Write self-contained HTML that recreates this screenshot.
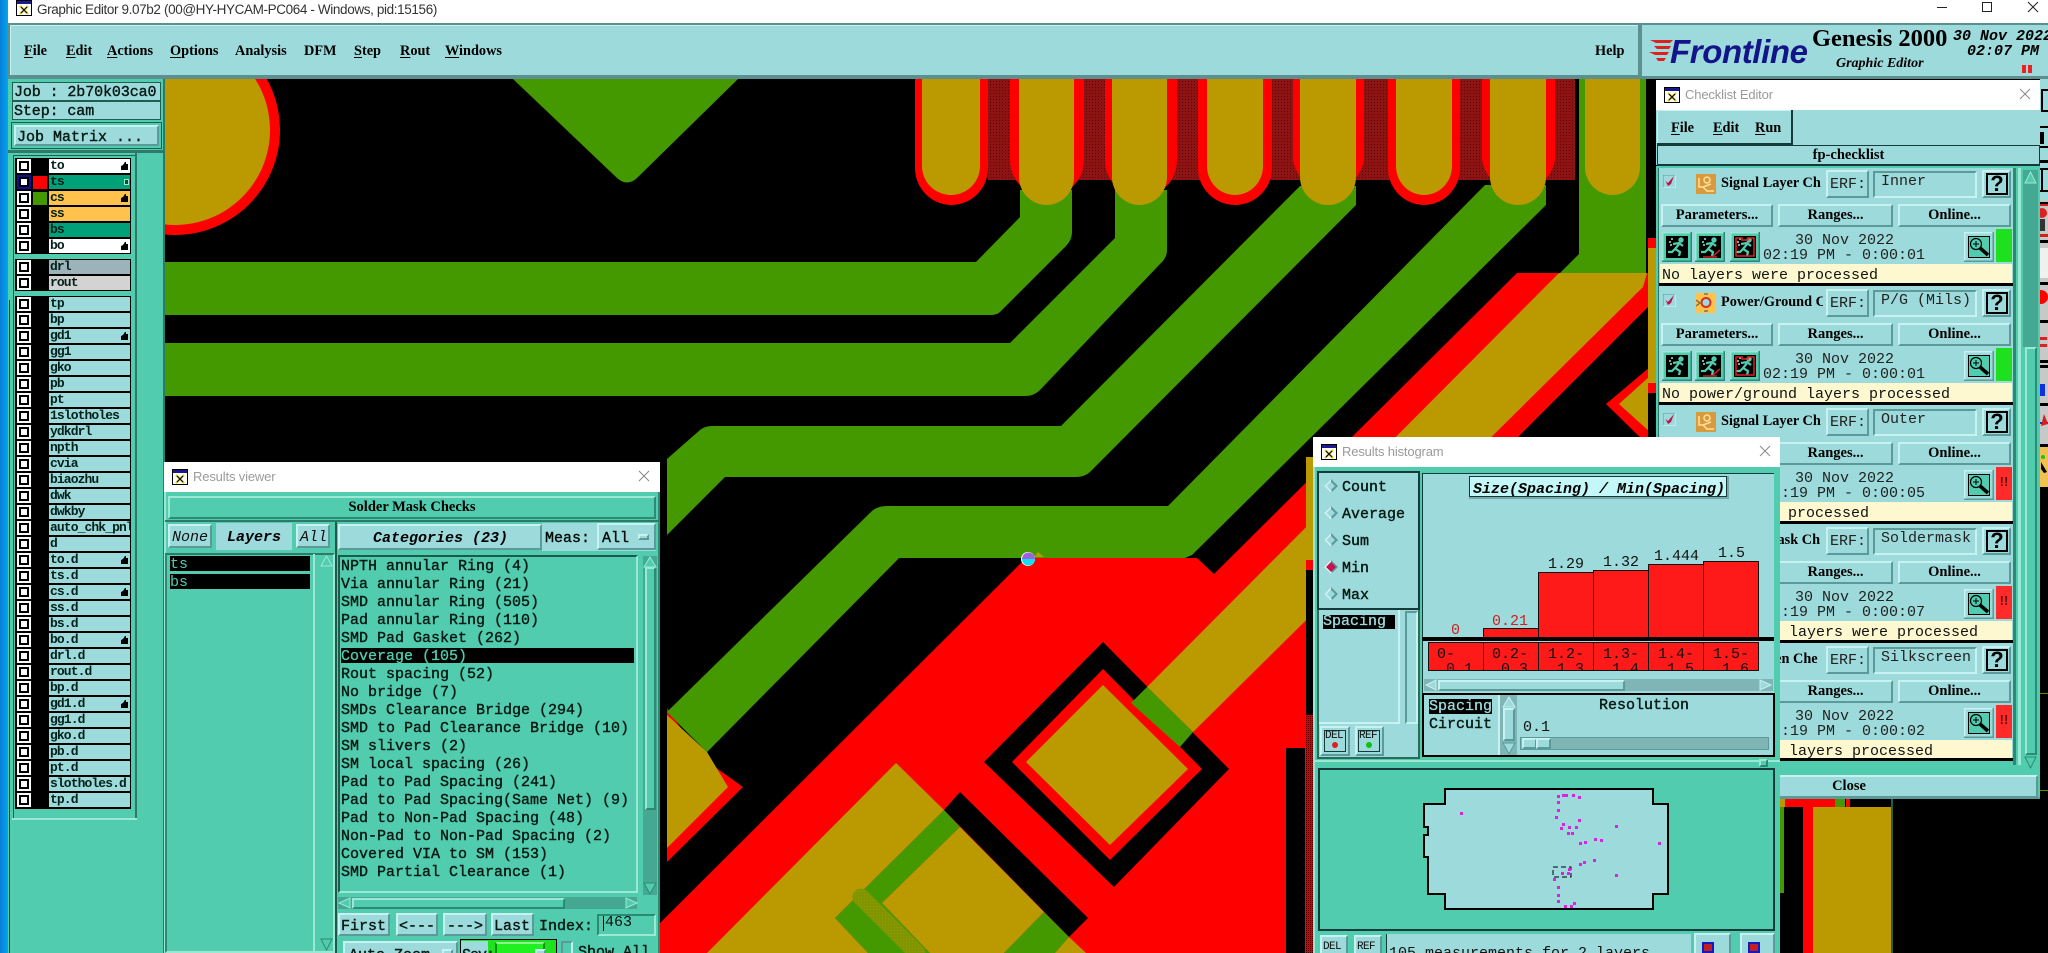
<!DOCTYPE html>
<html><head><meta charset="utf-8"><title>Graphic Editor</title>
<style>
html,body{margin:0;padding:0;width:2048px;height:953px;overflow:hidden;background:#000}
body{position:relative}
div,span,svg,b,i{position:absolute;display:block;box-sizing:border-box}
.t{white-space:pre;line-height:1;font:15px/1 "Liberation Mono",monospace;color:#111}
.tb{white-space:pre;font:15px/1 "Liberation Mono",monospace;color:#061a14;-webkit-text-stroke:.4px #061a14}
.ti{white-space:pre;font:italic 15px/1 "Liberation Mono",monospace;color:#111}
.tbi{white-space:pre;font:italic bold 15px/1 "Liberation Mono",monospace;color:#000}
.s{white-space:pre;font:bold 14.3px/1 "Liberation Serif",serif;color:#000}
.w{white-space:pre;font:13px/1 "Liberation Sans",sans-serif;color:#9a9a9a;letter-spacing:-.15px}
.b{background:#9ddadb;border:2px solid;border-color:#c8f1f1 #5c9a9a #5c9a9a #c8f1f1}
.g{background:#52ccae;border:2px solid;border-color:#9de8d4 #2d8a72 #2d8a72 #9de8d4}
.k{background:#9ddadb;border:2px solid;border-color:#5c9a9a #c8f1f1 #c8f1f1 #5c9a9a}
.kg{background:#52ccae;border:2px solid;border-color:#2d8a72 #9de8d4 #9de8d4 #2d8a72}
.c{text-align:center;font:bold 14.5px/19px "Liberation Serif",serif;color:#000;white-space:pre}
.cb{left:19px;width:10px;height:10px;background:#fff;border:2px solid #000;outline:2px solid #fff}
.n{left:49px;width:81px;height:14px;background:#9ddadb;overflow:hidden;white-space:pre;padding-left:1px;font:bold 13px/14px "Liberation Mono",monospace;letter-spacing:-.9px;color:#03211a}
.ul{position:static;display:inline;text-decoration:underline;text-underline-offset:2px}
.q{width:22px;height:22px;border:2px solid #000;text-align:center;font:bold 22px/18px 'Liberation Sans',sans-serif;color:#000}
.fl{background:#fdf8cf}
</style></head><body>
<svg width="0" height="0" style="left:0;top:0">
<defs>
<symbol id="ico" viewBox="0 0 16 16"><rect width="16" height="16" fill="#000"/><rect x="1" y="1" width="14" height="14" fill="#fff"/><rect x="1" y="1" width="14" height="3" fill="#1a1a8c"/><path d="M4 6l8 8M12 6l-8 8" stroke="#d8c800" stroke-width="2"/><path d="M5 7l6 6M11 7l-6 6" stroke="#000" stroke-width="1"/></symbol>
<symbol id="run" viewBox="0 0 30 30"><rect width="30" height="30" fill="#52ccae"/><path d="M0 30V0h30" fill="none" stroke="#9de8d4" stroke-width="3"/><path d="M30 0v30H0" fill="none" stroke="#2d8a72" stroke-width="3"/><rect x="4" y="4" width="22" height="22" fill="#000"/><g fill="none" stroke="#52ccae" stroke-width="2.2"><circle cx="19" cy="8" r="1.6" fill="#52ccae"/><path d="M18 11l-5 6 5 3-1 4M13 17l-3 3-4 0M11 12l6-1 4 3"/></g><path d="M7 10h2M9 7h2M8 13h2" stroke="#9de8d4" stroke-width="1.5"/></symbol>
<symbol id="run2" viewBox="0 0 30 30"><use href="#run"/><path d="M18 24l7-6M8 25h14" stroke="#d02020" stroke-width="1.5" fill="none"/></symbol>
<symbol id="run3" viewBox="0 0 30 30"><use href="#run"/><path d="M6 6h6v2h6V6h6v18H6z" fill="none" stroke="#e02020" stroke-width="1.5"/></symbol>
<symbol id="mag" viewBox="0 0 30 30"><rect width="30" height="30" fill="#9ddadb"/><path d="M0 30V0h30" fill="none" stroke="#c8f1f1" stroke-width="3"/><path d="M30 0v30H0" fill="none" stroke="#5c9a9a" stroke-width="3"/><rect x="4.500" y="4.500" width="21" height="21" fill="#52ccae" stroke="#000"/><circle cx="12" cy="12" r="5.500" fill="none" stroke="#000" stroke-width="1.200"/><path d="M9 12h6M12 9v6" stroke="#000"/><path d="M16 16l8 7" stroke="#000" stroke-width="3.500"/></symbol>
<symbol id="chk" viewBox="0 0 13 13"><rect width="13" height="13" fill="#9ddadb" stroke="#5c9a9a"/><path d="M0 13h13V0" fill="none" stroke="#c8f1f1" stroke-width="1.500"/><path d="M2.500 6l2.500 2 6-7-3 8-3 2z" fill="#c0104c"/></symbol>
<symbol id="org" viewBox="0 0 20 20"><rect width="20" height="20" fill="#d89a3a"/><circle cx="11" cy="6" r="3" fill="none" stroke="#ffe0a0" stroke-width="1.500"/><path d="M3 4v9h4l4 4M7 13l8-3M10 17h8" fill="none" stroke="#ffe0a0" stroke-width="1.500"/></symbol>
<symbol id="org2" viewBox="0 0 20 20"><rect width="20" height="20" fill="#ffc34d"/><circle cx="10" cy="9.500" r="4.500" fill="#9ddadb" stroke="#d83020" stroke-width="2"/><path d="M0 7l4 3-4 3M8 1h4M8 18h4" fill="none" stroke="#8a7040" stroke-width="1.500"/></symbol>
<symbol id="rad" viewBox="0 0 14 14"><path d="M7 0L14 7L7 14L0 7z" fill="#5c9a9a"/><path d="M7 0L0 7L7 14L8 12L3 7L7 3z" fill="#c8f1f1"/><path d="M7 3L11 7L7 11L3 7z" fill="#9ddadb"/></symbol>
<symbol id="radm" viewBox="0 0 14 14"><path d="M7 0L14 7L7 14L0 7z" fill="#5c9a9a"/><path d="M7 0L0 7L7 14L8 12L3 7L7 3z" fill="#e0f8f8"/><path d="M7 2L12 7L7 12L2 7z" fill="#c8104c"/></symbol>
<symbol id="hand" viewBox="0 0 9 10"><path d="M1 9V5l2-1 2-3 1 0 0 2 2 0 0 6z" fill="#000"/></symbol>
<pattern id="ht" width="3" height="3" patternUnits="userSpaceOnUse"><rect width="3" height="3" fill="#8e1414"/><rect width="1" height="1" fill="#5a0808"/></pattern>
<pattern id="ht2" width="2" height="2" patternUnits="userSpaceOnUse"><rect width="2" height="2" fill="#d00000"/><rect width="1" height="1" fill="#300"/></pattern>
<pattern id="ht3" width="3" height="3" patternUnits="userSpaceOnUse"><rect width="3" height="3" fill="#7f9600"/><rect width="1" height="1" fill="#a09800"/></pattern>
</defs></svg>

<!-- CANVAS -->
<svg width="2048" height="953" viewBox="0 0 2048 953" style="left:0;top:0">
<rect width="2048" height="953" fill="#000"/>
<circle cx="175" cy="130" r="105" fill="#f00"/><circle cx="175" cy="130" r="95" fill="#bb9900"/>
<path d="M513 79L617 178Q627 187 637 178L738 79z" fill="#449900"/>
<rect x="988" y="79" width="587" height="101" fill="url(#ht)"/>
<g fill="#f00">
<path d="M915 79V168A36.500 37 0 0 0 988 168V79z"/><path d="M1010 79V160A37 37 0 0 0 1084 160V79z"/><path d="M1105 79V160A36 37 0 0 0 1177 160V79z"/><path d="M1198 79V168A37 37 0 0 0 1272 168V79z"/><path d="M1293 79V160A36 37 0 0 0 1364 160V79z"/><path d="M1388 79V168A36 37 0 0 0 1460 168V79z"/><path d="M1482 79V160A37 37 0 0 0 1555 160V79z"/>
</g>
<path d="M1026 558H1197L1214 574L1517 273H1648V307L1313 642V953H630z" fill="#f00"/>
<g fill="#449900">
<path d="M165 262H976L1020 217V190H1072V232Q1072 240 1066 246L1000 312Q997 315 990 315H165z"/>
<path d="M165 343H1010L1115 238V190H1167V250Q1167 258 1160 264L1040 390Q1034 396 1026 396H165z"/>
<path d="M667 459L700 430Q705 426 712 426H1061L1300 186H1356V205L1090 472Q1085 477 1075 477H725L667 535z"/>
<path d="M667 712L870 513Q876 506 887 506H1168L1485 185H1546V205L1192 555L1185 558H899L707 752z"/>
<path d="M1579 79H1646V275H1558L1579 254z"/>
</g>
<g fill="#bb9900">
<path d="M922 79V166A29 29 0 0 0 980 166V79z"/><path d="M1019 79V177A27.500 28 0 0 0 1074 177V79z"/><path d="M1112 79V177A27.500 28 0 0 0 1167 177V79z"/><path d="M1207 79V166A28 29 0 0 0 1263 166V79z"/><path d="M1300 79V177A28 28 0 0 0 1356 177V79z"/><path d="M1396 79V166A28 29 0 0 0 1452 166V79z"/><path d="M1490 79V177A28 28 0 0 0 1546 177V79z"/><path d="M1585 79V167A27.500 28 0 0 0 1640 167V79z"/>
</g>
<path d="M1103 642L1229 769L1114 887L984 762z" fill="#000"/>
<path d="M1103 669L1202 769L1110 860L1012 762z" fill="#f00"/>
<path d="M1103 685L1188 769L1110 845L1026 762z" fill="#bb9900"/>
<path d="M1559 273H1647L1643 287L1193 732L1147 687z" fill="#bb9900"/>
<path d="M1147 687L1193 732L1180 747L1131 703z" fill="#449900"/>
<path d="M1606 404L1650 367V447z" fill="#f00"/><path d="M1619 404L1650 376V432z" fill="#bb9900"/>
<path d="M896 763L944 810L835 918L868 953H707z" fill="#bb9900"/>
<path d="M960 792L1088 918L1069 937L944 810z" fill="#000"/>
<path d="M944 810L960 827L882 903L930 953H868L835 918z" fill="#449900"/>
<path d="M960 827L1044 912L1004 953H930L882 903z" fill="#bb9900"/>
<path d="M1044 912L1069 937L1055 953H1004z" fill="#449900"/>
<path d="M1069 937L1086 953H1055z" fill="#bb9900"/>
<path d="M861 897L917 953" stroke="url(#ht3)" stroke-width="17" stroke-linecap="round"/>
<path d="M667 708L701 757L743 787L667 862z" fill="#f00"/>
<path d="M667 715L707 752L728 787L667 848z" fill="#bb9900"/>
<path d="M667 712L870 513L899 558L707 752z" fill="#449900"/>
<rect x="1286" y="748" width="19" height="205" fill="#000"/>
<rect x="1306" y="457" width="7" height="103" fill="#bb9900"/><rect x="1306" y="560" width="7" height="10" fill="#f00"/><rect x="1306" y="570" width="7" height="145" fill="#000"/><rect x="1306" y="715" width="7" height="238" fill="url(#ht2)"/>
<rect x="1648" y="79" width="8" height="159" fill="#000"/><rect x="1648" y="238" width="8" height="10" fill="#f00"/><rect x="1648" y="248" width="8" height="135" fill="#bb9900"/><rect x="1648" y="383" width="8" height="10" fill="#f00"/><rect x="1648" y="393" width="8" height="60" fill="#000"/>
<path d="M1038 552L1034 557H1044z" fill="#bb9900"/>
<circle cx="1028" cy="559" r="7" fill="#fff"/><path d="M1022 559a6.500 6.500 0 0 1 13 0z" fill="#a060e0"/><path d="M1022 559a6.500 6.500 0 0 0 13 0z" fill="#10e0f0"/>
<!-- bottom right -->
<rect x="1780" y="799" width="5" height="8" fill="#bb9900"/><rect x="1785" y="799" width="50" height="8" fill="#f00"/><rect x="1835" y="799" width="10" height="8" fill="#449900"/><rect x="1846" y="799" width="4" height="8" fill="#f00"/>
<rect x="1780" y="807" width="4" height="86" fill="#449900"/>
<rect x="1803" y="807" width="10" height="146" fill="#f00"/><rect x="1813" y="807" width="78" height="146" fill="#bb9900"/><rect x="1891" y="799" width="2" height="154" fill="#2a5a4a"/>
<rect x="2040" y="693" width="8" height="1" fill="#449900"/><rect x="2040" y="790" width="8" height="1" fill="#449900"/>
<!-- right toolbar -->
<rect x="2040" y="60" width="8" height="427" fill="#c8c8c8"/>
<rect x="2040" y="60" width="8" height="140" fill="#9ddadb"/>
<rect x="2041" y="89" width="7" height="2" fill="#000"/><rect x="2041" y="110" width="7" height="2" fill="#000"/><rect x="2041" y="89" width="2" height="23" fill="#000"/>
<rect x="2040" y="126" width="8" height="2" fill="#000"/><rect x="2040" y="146" width="8" height="2" fill="#000"/><rect x="2040" y="132" width="4" height="12" fill="#000"/>
<rect x="2040" y="160" width="8" height="3" fill="#000"/><rect x="2041" y="168" width="2" height="24" fill="#000"/><rect x="2040" y="168" width="8" height="2" fill="#000"/><rect x="2040" y="190" width="8" height="2" fill="#000"/>
<rect x="2040" y="202" width="8" height="3" fill="#000"/>
<rect x="2040" y="204" width="8" height="2" fill="#d02020"/><circle cx="2042" cy="213" r="5" fill="#e02020"/><rect x="2040" y="219" width="5" height="12" fill="#333"/>
<rect x="2040" y="234" width="8" height="3" fill="#d02020"/><rect x="2040" y="240" width="8" height="3" fill="#000"/><rect x="2040" y="248" width="8" height="30" fill="#f0f0f0"/><rect x="2040" y="282" width="8" height="3" fill="#000"/><circle cx="2041" cy="297" r="7" fill="#f00"/><rect x="2040" y="320" width="8" height="3" fill="#000"/><rect x="2040" y="337" width="7" height="3" fill="#e02020"/><rect x="2040" y="344" width="7" height="3" fill="#e02020"/><rect x="2040" y="360" width="8" height="3" fill="#000"/><rect x="2040" y="365" width="8" height="3" fill="#000"/><rect x="2040" y="384" width="5" height="12" fill="#1030e0"/><rect x="2040" y="403" width="8" height="3" fill="#000"/><rect x="2040" y="422" width="8" height="2" fill="#1030e0"/><path d="M2041 426l3-12 4 10z" fill="#d02020"/><rect x="2040" y="444" width="8" height="3" fill="#000"/><rect x="2040" y="447" width="8" height="40" fill="#f0c050"/><circle cx="2043" cy="457" r="2" fill="#20c020"/><path d="M2041 462l6 10-3 1-3-4z" fill="#000"/>
</svg>

<!-- left blue and title bar -->
<div style="left:0;top:0;width:8px;height:953px;background:linear-gradient(90deg,#0a7ed8,#00a6ee)"></div>
<div style="left:8px;top:0;width:2040px;height:23px;background:#fff"></div>
<svg style="left:16px;top:0" width="16" height="16"><use href="#ico"/></svg>
<span class="w" style="left:37px;top:3px;color:#333;font-size:13.5px;letter-spacing:-.37px">Graphic Editor 9.07b2 (00@HY-HYCAM-PC064 - Windows, pid:15156)</span>
<svg style="left:1930px;top:0" width="118" height="16"><path d="M7 7.500H17M52.500 2.500h9v9h-9zM98 2l10 10M108 2L98 12" fill="none" stroke="#222" stroke-width="1"/></svg>

<!-- menu bar -->
<div style="left:8px;top:23px;width:1632px;height:56px;background:#9ddadb;border:solid #5c8f8f;border-width:2px 2px 4px 2px;box-shadow:inset 1px 1px 0 #c8f1f1"></div>
<span class="s" style="left:24px;top:44px"><span class="ul">F</span>ile</span>
<span class="s" style="left:66px;top:44px"><span class="ul">E</span>dit</span>
<span class="s" style="left:107px;top:44px"><span class="ul">A</span>ctions</span>
<span class="s" style="left:170px;top:44px"><span class="ul">O</span>ptions</span>
<span class="s" style="left:235px;top:44px">Analysis</span>
<span class="s" style="left:304px;top:44px">DFM</span>
<span class="s" style="left:354px;top:44px"><span class="ul">S</span>tep</span>
<span class="s" style="left:400px;top:44px"><span class="ul">R</span>out</span>
<span class="s" style="left:445px;top:44px"><span class="ul">W</span>indows</span>
<span class="s" style="left:1595px;top:44px">Help</span>

<!-- logo panel -->
<div style="left:1640px;top:23px;width:408px;height:56px;background:#9ddadb;border:solid #5c8f8f;border-width:2px 0 3px 2px"></div>
<svg style="left:1648px;top:36px" width="26" height="28"><path d="M2 4H25L22 7H8zM6 10H23L21 13H9zM1 16H21L19 19H7zM8 22H18L16 25H10z" fill="#e02020"/></svg>
<span style="left:1670px;top:35px;white-space:pre;font:italic bold 33px/1 'Liberation Sans',sans-serif;color:#14148a;letter-spacing:-.4px">Frontline</span>
<span class="s" style="left:1812px;top:27px;font-size:24.5px">Genesis 2000</span>
<span class="s" style="left:1836px;top:57px;font-style:italic;font-size:14px">Graphic Editor</span>
<span class="tbi" style="left:1953px;top:29px">30 Nov 2022</span>
<span class="tbi" style="left:1967px;top:44px">02:07 PM</span>
<div style="left:2022px;top:65px;width:4px;height:8px;background:#f02020"></div><div style="left:2028px;top:65px;width:4px;height:8px;background:#f02020"></div>

<!-- left panel -->
<div style="left:8px;top:79px;width:157px;height:874px;background:#52ccae;border-right:2px solid #2d7a68"></div>
<div style="left:12px;top:82px;width:149px;height:19px;background:#9ddadb;border:1.500px solid #1f5f50"></div>
<span class="tb" style="left:14px;top:85px;letter-spacing:-.1px">Job : 2b70k03ca0</span>
<div style="left:12px;top:101px;width:149px;height:19px;background:#9ddadb;border:1.500px solid #1f5f50"></div>
<span class="tb" style="left:14px;top:104px;letter-spacing:-.1px">Step: cam</span>
<div style="left:11px;top:122px;width:151px;height:27px;background:#52ccae;border:1.500px solid #1f5f50"></div>
<div class="b" style="left:14px;top:125px;width:145px;height:21px"></div>
<span class="tb" style="left:17px;top:130px">Job Matrix ...</span>
<div style="left:8px;top:150px;width:157px;height:3px;background:#2d7a68"></div>
<div style="left:135px;top:153px;width:2px;height:665px;background:#2d7a68"></div>
<div style="left:9px;top:300px;width:1px;height:653px;background:#153f35"></div>
<div style="left:13px;top:156px;width:1px;height:662px;background:#1f5f50"></div>
<div style="left:13px;top:155px;width:122px;height:1px;background:#1f5f50"></div>
<div style="left:12px;top:818px;width:125px;height:2px;background:#9de8d4"></div>
<div style="left:15px;top:158px;width:116px;height:96px;background:#000"></div>
<div style="left:15px;top:259px;width:116px;height:32px;background:#000"></div>
<div style="left:15px;top:296px;width:116px;height:513px;background:#000"></div>
<div style="left:33px;top:176px;width:14px;height:13px;background:#f00"></div>
<div style="left:33px;top:192px;width:14px;height:13px;background:#449900"></div>
<i class="cb" style="top:161px"></i><b class="n" style="top:159px;background:#fff">to</b>
<i class="cb" style="top:177px;outline-color:#101090"></i><b class="n" style="top:175px;background:#00a078">ts</b>
<i class="cb" style="top:193px"></i><b class="n" style="top:191px;background:#ffc34d">cs</b>
<i class="cb" style="top:209px"></i><b class="n" style="top:207px;background:#ffc34d">ss</b>
<i class="cb" style="top:225px"></i><b class="n" style="top:223px;background:#00a078">bs</b>
<i class="cb" style="top:241px"></i><b class="n" style="top:239px;background:#fff">bo</b>
<i class="cb" style="top:262px"></i><b class="n" style="top:260px;background:#9db3bb">drl</b>
<i class="cb" style="top:278px"></i><b class="n" style="top:276px;background:#d3d3d3">rout</b>
<i class="cb" style="top:299px"></i><b class="n" style="top:297px">tp</b>
<i class="cb" style="top:315px"></i><b class="n" style="top:313px">bp</b>
<i class="cb" style="top:331px"></i><b class="n" style="top:329px">gd1</b>
<i class="cb" style="top:347px"></i><b class="n" style="top:345px">gg1</b>
<i class="cb" style="top:363px"></i><b class="n" style="top:361px">gko</b>
<i class="cb" style="top:379px"></i><b class="n" style="top:377px">pb</b>
<i class="cb" style="top:395px"></i><b class="n" style="top:393px">pt</b>
<i class="cb" style="top:411px"></i><b class="n" style="top:409px">1slotholes</b>
<i class="cb" style="top:427px"></i><b class="n" style="top:425px">ydkdrl</b>
<i class="cb" style="top:443px"></i><b class="n" style="top:441px">npth</b>
<i class="cb" style="top:459px"></i><b class="n" style="top:457px">cvia</b>
<i class="cb" style="top:475px"></i><b class="n" style="top:473px">biaozhu</b>
<i class="cb" style="top:491px"></i><b class="n" style="top:489px">dwk</b>
<i class="cb" style="top:507px"></i><b class="n" style="top:505px">dwkby</b>
<i class="cb" style="top:523px"></i><b class="n" style="top:521px">auto_chk_pnl</b>
<i class="cb" style="top:539px"></i><b class="n" style="top:537px">d</b>
<i class="cb" style="top:555px"></i><b class="n" style="top:553px">to.d</b>
<i class="cb" style="top:571px"></i><b class="n" style="top:569px">ts.d</b>
<i class="cb" style="top:587px"></i><b class="n" style="top:585px">cs.d</b>
<i class="cb" style="top:603px"></i><b class="n" style="top:601px">ss.d</b>
<i class="cb" style="top:619px"></i><b class="n" style="top:617px">bs.d</b>
<i class="cb" style="top:635px"></i><b class="n" style="top:633px">bo.d</b>
<i class="cb" style="top:651px"></i><b class="n" style="top:649px">drl.d</b>
<i class="cb" style="top:667px"></i><b class="n" style="top:665px">rout.d</b>
<i class="cb" style="top:683px"></i><b class="n" style="top:681px">bp.d</b>
<i class="cb" style="top:699px"></i><b class="n" style="top:697px">gd1.d</b>
<i class="cb" style="top:715px"></i><b class="n" style="top:713px">gg1.d</b>
<i class="cb" style="top:731px"></i><b class="n" style="top:729px">gko.d</b>
<i class="cb" style="top:747px"></i><b class="n" style="top:745px">pb.d</b>
<i class="cb" style="top:763px"></i><b class="n" style="top:761px">pt.d</b>
<i class="cb" style="top:779px"></i><b class="n" style="top:777px">slotholes.d</b>
<i class="cb" style="top:795px"></i><b class="n" style="top:793px">tp.d</b>
<svg style="left:120px;top:161px" width="9" height="10"><use href="#hand"/></svg>
<svg style="left:120px;top:193px" width="9" height="10"><use href="#hand"/></svg>
<svg style="left:120px;top:241px" width="9" height="10"><use href="#hand"/></svg>
<svg style="left:120px;top:331px" width="9" height="10"><use href="#hand"/></svg>
<svg style="left:120px;top:555px" width="9" height="10"><use href="#hand"/></svg>
<svg style="left:120px;top:587px" width="9" height="10"><use href="#hand"/></svg>
<svg style="left:120px;top:635px" width="9" height="10"><use href="#hand"/></svg>
<svg style="left:120px;top:699px" width="9" height="10"><use href="#hand"/></svg>
<div style="left:124px;top:179px;width:5px;height:6px;background:#052;border:1px solid #9de8d4"></div>

<!-- CHECKLIST EDITOR -->
<div style="left:1656px;top:80px;width:384px;height:30px;background:#fff"></div>
<svg style="left:1664px;top:87px" width="16" height="16"><use href="#ico"/></svg>
<span class="w" style="left:1685px;top:88px">Checklist Editor</span>
<svg style="left:2018px;top:87px" width="14" height="14"><path d="M2 2l10 10M12 2L2 12" stroke="#888" fill="none"/></svg>
<div style="left:1656px;top:110px;width:384px;height:55px;background:#9ddadb"></div>
<div style="left:1657px;top:110px;width:136px;height:35px;background:#9ddadb;border:solid #163a3a;border-width:0 2px 2px 0;box-shadow:inset 1px 1px 0 #c8f1f1"></div>
<span class="s" style="left:1671px;top:121px"><span class="ul">F</span>ile</span>
<span class="s" style="left:1713px;top:121px"><span class="ul">E</span>dit</span>
<span class="s" style="left:1755px;top:121px"><span class="ul">R</span>un</span>
<div class="c" style="left:1657px;top:145px;width:383px;height:21px;background:#9ddadb;border:solid #163a3a;border-width:1px 1px 2px 1px">fp-checklist</div>
<div style="left:1656px;top:166px;width:384px;height:633px;background:#52ccae;border-bottom:2px solid #5c9a9a"></div>
<div style="left:1658px;top:168px;width:355px;height:592px;background:#9ddadb;border-left:1px solid #2d7a68"></div>
<div style="left:2013px;top:168px;width:3px;height:597px;background:#2d8a72"></div>
<div style="left:2018px;top:168px;width:3px;height:597px;background:#9de8d4"></div>
<div style="left:2023px;top:170px;width:15px;height:177px;background:#45a892"></div>
<div class="g" style="left:2025px;top:347px;width:12px;height:408px"></div>
<div style="left:2023px;top:755px;width:15px;height:16px;background:#52ccae"></div>
<svg style="left:2023px;top:170px" width="16" height="602"><path d="M7.500 2L13 13H2z" fill="#52ccae" stroke="#9de8d4"/><path d="M7.500 598L13 587H2z" fill="#52ccae" stroke="#2d8a72"/></svg>

<!-- row 1 -->
<svg style="left:1663px;top:175px" width="13" height="13"><use href="#chk"/></svg><svg style="left:1696px;top:174px" width="20" height="20"><use href="#org"/></svg>
<div style="left:1721px;top:176px;width:102px;height:16px;overflow:hidden"><span class="s" style="left:0;top:0">Signal Layer Ch</span></div>
<div class="b" style="left:1826px;top:170px;width:43px;height:28px"></div><span class="t" style="left:1830px;top:177px;color:#222">ERF:</span>
<div class="k" style="left:1873px;top:171px;width:104px;height:27px"></div><span class="t" style="left:1881px;top:174px;color:#222">Inner</span>
<div class="b" style="left:1982px;top:170px;width:29px;height:28px"></div><div class="q" style="left:1986px;top:173px">?</div>
<div class="b c" style="left:1661px;top:204px;width:112px;height:23px">Parameters...</div><div class="b c" style="left:1778px;top:204px;width:115px;height:23px">Ranges...</div><div class="b c" style="left:1898px;top:204px;width:113px;height:23px">Online...</div>
<svg style="left:1662px;top:232px" width="30" height="30"><use href="#run"/></svg><svg style="left:1695px;top:232px" width="30" height="30"><use href="#run2"/></svg><svg style="left:1730px;top:232px" width="30" height="30"><use href="#run3"/></svg>
<span class="t" style="left:1795px;top:233px;color:#222">30 Nov 2022</span><span class="t" style="left:1763px;top:248px;color:#222">02:19 PM - 0:00:01</span>
<svg style="left:1964px;top:232px" width="30" height="30"><use href="#mag"/></svg>
<div style="left:1996px;top:229px;width:16px;height:33px;background:#1ee01e"></div>
<div class="fl" style="left:1660px;top:264px;width:352px;height:19px"></div><span class="t" style="left:1662px;top:268px">No layers were processed</span>
<div style="left:1659px;top:283px;width:354px;height:3px;background:#000"></div>

<!-- row 2 -->
<svg style="left:1663px;top:294px" width="13" height="13"><use href="#chk"/></svg><svg style="left:1696px;top:293px" width="20" height="20"><use href="#org2"/></svg>
<div style="left:1721px;top:295px;width:102px;height:16px;overflow:hidden"><span class="s" style="left:0;top:0">Power/Ground Ch</span></div>
<div class="b" style="left:1826px;top:289px;width:43px;height:28px"></div><span class="t" style="left:1830px;top:296px;color:#222">ERF:</span>
<div class="k" style="left:1873px;top:290px;width:104px;height:27px"></div><span class="t" style="left:1881px;top:293px;color:#222">P/G (Mils)</span>
<div class="b" style="left:1982px;top:289px;width:29px;height:28px"></div><div class="q" style="left:1986px;top:292px">?</div>
<div class="b c" style="left:1661px;top:323px;width:112px;height:23px">Parameters...</div><div class="b c" style="left:1778px;top:323px;width:115px;height:23px">Ranges...</div><div class="b c" style="left:1898px;top:323px;width:113px;height:23px">Online...</div>
<svg style="left:1662px;top:351px" width="30" height="30"><use href="#run"/></svg><svg style="left:1695px;top:351px" width="30" height="30"><use href="#run2"/></svg><svg style="left:1730px;top:351px" width="30" height="30"><use href="#run3"/></svg>
<span class="t" style="left:1795px;top:352px;color:#222">30 Nov 2022</span><span class="t" style="left:1763px;top:367px;color:#222">02:19 PM - 0:00:01</span>
<svg style="left:1964px;top:351px" width="30" height="30"><use href="#mag"/></svg>
<div style="left:1996px;top:348px;width:16px;height:33px;background:#1ee01e"></div>
<div class="fl" style="left:1660px;top:383px;width:352px;height:19px"></div><span class="t" style="left:1662px;top:387px">No power/ground layers processed</span>
<div style="left:1659px;top:402px;width:354px;height:3px;background:#000"></div>

<!-- row 3 -->
<svg style="left:1663px;top:413px" width="13" height="13"><use href="#chk"/></svg><svg style="left:1696px;top:412px" width="20" height="20"><use href="#org"/></svg>
<div style="left:1721px;top:414px;width:102px;height:16px;overflow:hidden"><span class="s" style="left:0;top:0">Signal Layer Ch</span></div>
<div class="b" style="left:1826px;top:408px;width:43px;height:28px"></div><span class="t" style="left:1830px;top:415px;color:#222">ERF:</span>
<div class="k" style="left:1873px;top:409px;width:104px;height:27px"></div><span class="t" style="left:1881px;top:412px;color:#222">Outer</span>
<div class="b" style="left:1982px;top:408px;width:29px;height:28px"></div><div class="q" style="left:1986px;top:411px">?</div>
<div class="b c" style="left:1661px;top:442px;width:112px;height:23px">Parameters...</div><div class="b c" style="left:1778px;top:442px;width:115px;height:23px">Ranges...</div><div class="b c" style="left:1898px;top:442px;width:113px;height:23px">Online...</div>
<span class="t" style="left:1795px;top:471px;color:#222">30 Nov 2022</span><span class="t" style="left:1763px;top:486px;color:#222">02:19 PM - 0:00:05</span>
<svg style="left:1964px;top:470px" width="30" height="30"><use href="#mag"/></svg>
<div style="left:1996px;top:467px;width:16px;height:33px;background:#ff2a2a;text-align:center;font:bold 13px/30px 'Liberation Sans',sans-serif;color:#611">!!</div>
<div class="fl" style="left:1660px;top:502px;width:352px;height:19px"></div><span class="t" style="left:1788px;top:506px">processed</span>
<div style="left:1659px;top:521px;width:354px;height:3px;background:#000"></div>

<!-- row 4 -->
<div style="left:1721px;top:533px;width:102px;height:16px;overflow:hidden"><span class="s" style="left:0;top:0">Solder Mask Ch</span></div>
<div class="b" style="left:1826px;top:527px;width:43px;height:28px"></div><span class="t" style="left:1830px;top:534px;color:#222">ERF:</span>
<div class="k" style="left:1873px;top:528px;width:104px;height:27px"></div><span class="t" style="left:1881px;top:531px;color:#222">Soldermask</span>
<div class="b" style="left:1982px;top:527px;width:29px;height:28px"></div><div class="q" style="left:1986px;top:530px">?</div>
<div class="b c" style="left:1778px;top:561px;width:115px;height:23px">Ranges...</div><div class="b c" style="left:1898px;top:561px;width:113px;height:23px">Online...</div>
<span class="t" style="left:1795px;top:590px;color:#222">30 Nov 2022</span><span class="t" style="left:1763px;top:605px;color:#222">02:19 PM - 0:00:07</span>
<svg style="left:1964px;top:589px" width="30" height="30"><use href="#mag"/></svg>
<div style="left:1996px;top:586px;width:16px;height:33px;background:#ff2a2a;text-align:center;font:bold 13px/30px 'Liberation Sans',sans-serif;color:#611">!!</div>
<div class="fl" style="left:1660px;top:621px;width:352px;height:19px"></div><span class="t" style="left:1789px;top:625px">layers were processed</span>
<div style="left:1659px;top:640px;width:354px;height:3px;background:#000"></div>

<!-- row 5 -->
<div style="left:1721px;top:652px;width:102px;height:16px;overflow:hidden"><span class="s" style="left:0;top:0">Silk Screen Che</span></div>
<div class="b" style="left:1826px;top:646px;width:43px;height:28px"></div><span class="t" style="left:1830px;top:653px;color:#222">ERF:</span>
<div class="k" style="left:1873px;top:647px;width:104px;height:27px"></div><span class="t" style="left:1881px;top:650px;color:#222">Silkscreen</span>
<div class="b" style="left:1982px;top:646px;width:29px;height:28px"></div><div class="q" style="left:1986px;top:649px">?</div>
<div class="b c" style="left:1778px;top:680px;width:115px;height:23px">Ranges...</div><div class="b c" style="left:1898px;top:680px;width:113px;height:23px">Online...</div>
<span class="t" style="left:1795px;top:709px;color:#222">30 Nov 2022</span><span class="t" style="left:1763px;top:724px;color:#222">02:19 PM - 0:00:02</span>
<svg style="left:1964px;top:708px" width="30" height="30"><use href="#mag"/></svg>
<div style="left:1996px;top:705px;width:16px;height:33px;background:#ff2a2a;text-align:center;font:bold 13px/30px 'Liberation Sans',sans-serif;color:#611">!!</div>
<div class="fl" style="left:1660px;top:740px;width:352px;height:18px"></div><span class="t" style="left:1789px;top:744px">layers processed</span>
<div style="left:1659px;top:758px;width:354px;height:3px;background:#000"></div>
<div class="b c" style="left:1660px;top:775px;width:378px;height:23px">Close</div>

<!-- RESULTS HISTOGRAM -->
<div style="left:1313px;top:437px;width:467px;height:30px;background:#fff"></div>
<svg style="left:1321px;top:444px" width="16" height="16"><use href="#ico"/></svg>
<span class="w" style="left:1342px;top:445px">Results histogram</span>
<svg style="left:1758px;top:444px" width="14" height="14"><path d="M2 2l10 10M12 2L2 12" stroke="#888" fill="none"/></svg>
<div style="left:1313px;top:467px;width:467px;height:486px;background:#52ccae;border-left:2px solid #9de8d4"></div>
<div style="left:1317px;top:471px;width:103px;height:139px;background:#9ddadb;border:2px solid #163a3a"></div>
<svg style="left:1324px;top:479px" width="14" height="14"><use href="#rad"/></svg><span class="tb" style="left:1342px;top:480px">Count</span>
<svg style="left:1324px;top:506px" width="14" height="14"><use href="#rad"/></svg><span class="tb" style="left:1342px;top:507px">Average</span>
<svg style="left:1324px;top:533px" width="14" height="14"><use href="#rad"/></svg><span class="tb" style="left:1342px;top:534px">Sum</span>
<svg style="left:1324px;top:560px" width="14" height="14"><use href="#radm"/></svg><span class="tb" style="left:1342px;top:561px">Min</span>
<svg style="left:1324px;top:587px" width="14" height="14"><use href="#rad"/></svg><span class="tb" style="left:1342px;top:588px">Max</span>
<div style="left:1317px;top:610px;width:103px;height:149px;background:#9ddadb;border:solid #2d6a5a;border-width:0 2px 2px 2px"></div>
<div style="left:1319px;top:610px;width:81px;height:114px;background:#9ddadb;border:solid #c8f1f1;border-width:0 2px 2px 0"></div>
<div class="tb" style="left:1323px;top:615px;width:72px;height:14px;background:#000;color:#9ddadb;-webkit-text-stroke:.3px #9ddadb;line-height:14px">Spacing</div>
<div class="k" style="left:1405px;top:611px;width:13px;height:113px"></div>
<div class="b" style="left:1320px;top:726px;width:30px;height:30px"></div>
<div style="left:1324px;top:730px;width:22px;height:22px;border:1px solid #163a3a"></div><span class="t" style="left:1325px;top:731px;font-size:11px;letter-spacing:-.6px">DEL</span><div style="left:1332px;top:742px;width:6px;height:6px;border-radius:50%;background:#e02020"></div>
<div class="b" style="left:1355px;top:726px;width:29px;height:30px"></div>
<div style="left:1358px;top:730px;width:22px;height:22px;border:1px solid #163a3a"></div><span class="t" style="left:1359px;top:731px;font-size:11px;letter-spacing:-.6px">REF</span><div style="left:1366px;top:742px;width:6px;height:6px;border-radius:50%;background:#10c010"></div>
<!-- chart -->
<div style="left:1422px;top:473px;width:352px;height:220px;background:#9ddadb;border-top:1px solid #163a3a;border-left:1px solid #163a3a"></div>
<div style="left:1469px;top:476px;width:260px;height:23px;background:#78a8a8"></div>
<div class="tbi" style="left:1469px;top:476px;width:258px;height:21px;background:#c4f7f7;border:1px solid #163a3a;padding:5px 0 0 3px;font-size:15px">Size(Spacing) / Min(Spacing)</div>
<svg style="left:1422px;top:550px" width="352" height="125"><g fill="#ff1a1a" stroke="#111"><rect x="61.500" y="78.500" width="55" height="9"/><rect x="116.500" y="22.500" width="55" height="65"/><rect x="171.500" y="20.500" width="55" height="67"/><rect x="226.500" y="14.500" width="55" height="73"/><rect x="281.500" y="11.500" width="55" height="76"/></g><rect y="87" width="352" height="4" fill="#000"/><rect x="6.500" y="92.500" width="330" height="28" fill="#ff1a1a" stroke="#111"/><path d="M61.500 92V120M116.500 92V120M171.500 92V120M226.500 92V120M281.500 92V120" stroke="#111"/></svg>
<span class="t" style="left:1451px;top:623px;color:#d02020">0</span>
<span class="t" style="left:1492px;top:614px;color:#d02020">0.21</span>
<span class="t" style="left:1548px;top:557px">1.29</span>
<span class="t" style="left:1603px;top:555px">1.32</span>
<span class="t" style="left:1654px;top:549px">1.444</span>
<span class="t" style="left:1718px;top:546px">1.5</span>
<div style="left:1428px;top:642px;width:330px;height:28px;overflow:hidden">
<span class="t" style="left:9px;top:5px">0-</span><span class="t" style="left:18px;top:20px">0.1</span>
<span class="t" style="left:64px;top:5px">0.2-</span><span class="t" style="left:73px;top:20px">0.3</span>
<span class="t" style="left:120px;top:5px">1.2-</span><span class="t" style="left:129px;top:20px">1.3</span>
<span class="t" style="left:175px;top:5px">1.3-</span><span class="t" style="left:184px;top:20px">1.4</span>
<span class="t" style="left:230px;top:5px">1.4-</span><span class="t" style="left:239px;top:20px">1.5</span>
<span class="t" style="left:285px;top:5px">1.5-</span><span class="t" style="left:294px;top:20px">1.6</span>
</div>
<div style="left:1424px;top:679px;width:349px;height:12px;background:#7fb5b5"></div>
<div class="b" style="left:1438px;top:680px;width:187px;height:11px"></div>
<svg style="left:1424px;top:679px" width="349" height="12"><path d="M12 1V11L2 6z" fill="#9ddadb" stroke="#c8f1f1"/><path d="M336 1V11L347 6z" fill="#9ddadb" stroke="#c8f1f1"/></svg>
<div style="left:1422px;top:693px;width:353px;height:64px;background:#9ddadb;border:2px solid #000"></div>
<div style="left:1498px;top:695px;width:2px;height:60px;background:#c8f1f1"></div>
<div style="left:1500px;top:695px;width:17px;height:60px;background:#7fb5b5"></div>
<div class="b" style="left:1503px;top:708px;width:12px;height:33px"></div>
<svg style="left:1502px;top:696px" width="14" height="60"><path d="M7 1L13 11H1z" fill="#9ddadb" stroke="#c8f1f1"/><path d="M7 58L13 47H1z" fill="#9ddadb" stroke="#5c9a9a"/></svg>
<div class="tb" style="left:1429px;top:699px;width:63px;height:15px;background:#000;color:#9ddadb;-webkit-text-stroke:.3px #9ddadb;line-height:15px;overflow:hidden">Spacing</div>
<span class="tb" style="left:1429px;top:717px">Circuit</span>
<span class="tb" style="left:1599px;top:698px">Resolution</span>
<span class="t" style="left:1523px;top:720px">0.1</span>
<div style="left:1520px;top:737px;width:249px;height:13px;background:#7fb5b5;border:1px solid #5c9a9a"></div>
<div class="b" style="left:1522px;top:738px;width:15px;height:11px"></div><div class="b" style="left:1536px;top:738px;width:15px;height:11px"></div>
<!-- separator -->
<div style="left:1315px;top:760px;width:465px;height:2px;background:#9de8d4"></div>
<div class="g" style="left:1759px;top:759px;width:9px;height:8px"></div>
<!-- map -->
<div style="left:1318px;top:768px;width:457px;height:163px;background:#52ccae;border:2px solid #163a3a"></div>
<svg style="left:1400px;top:780px" width="290" height="140" viewBox="1400 780 290 140"><path d="M1445 789H1653V804H1668V894H1653V909H1445V894H1428V857H1424V835H1428V827H1424V804H1445z" fill="#9ddadb" stroke="#000" stroke-width="2"/><path d="M1553 867h18v10h-18z" fill="none" stroke="#000" stroke-dasharray="5 3"/><path fill="#e020e0" d="M1460 812h3v3h-3zM1557 795h3v3h-3zM1562 794h3v3h-3zM1565 794h3v3h-3zM1572 794h3v3h-3zM1578 796h3v3h-3zM1557 801h3v3h-3zM1557 809h3v3h-3zM1555 816h3v3h-3zM1578 819h3v3h-3zM1562 823h3v3h-3zM1560 827h3v3h-3zM1568 826h3v3h-3zM1575 826h3v3h-3zM1567 832h3v3h-3zM1571 832h3v3h-3zM1615 825h3v3h-3zM1579 842h3v3h-3zM1584 841h3v3h-3zM1594 838h3v3h-3zM1600 839h3v3h-3zM1658 842h3v3h-3zM1579 863h3v3h-3zM1583 861h3v3h-3zM1593 859h3v3h-3zM1615 874h3v3h-3zM1561 872h3v3h-3zM1567 872h3v3h-3zM1568 868h3v3h-3zM1553 878h3v3h-3zM1557 886h3v3h-3zM1557 894h3v3h-3zM1557 900h3v3h-3zM1564 905h3v3h-3zM1570 905h3v3h-3zM1573 902h3v3h-3z"/></svg>
<!-- bottom row -->
<div class="b" style="left:1320px;top:935px;width:28px;height:30px"></div><span class="t" style="left:1323px;top:942px;font-size:11px;letter-spacing:-.6px">DEL</span>
<div class="b" style="left:1354px;top:935px;width:28px;height:30px"></div><span class="t" style="left:1357px;top:942px;font-size:11px;letter-spacing:-.6px">REF</span>
<div style="left:1386px;top:934px;width:305px;height:19px;background:#9ddadb;border-left:1px solid #163a3a"></div>
<span class="t" style="left:1389px;top:946px">105 measurements for 2 layers</span>
<div class="b" style="left:1694px;top:933px;width:37px;height:24px"></div><div style="left:1702px;top:942px;width:12px;height:11px;background:#c02020;border:2px solid #1818c0"></div>
<div class="b" style="left:1740px;top:933px;width:35px;height:24px"></div><div style="left:1748px;top:942px;width:12px;height:11px;background:#c02020;border:2px solid #1818c0"></div>

<!-- RESULTS VIEWER -->
<div style="left:164px;top:462px;width:496px;height:30px;background:#fff"></div>
<svg style="left:172px;top:469px" width="16" height="16"><use href="#ico"/></svg>
<span class="w" style="left:193px;top:470px">Results viewer</span>
<svg style="left:637px;top:469px" width="14" height="14"><path d="M2 2l10 10M12 2L2 12" stroke="#888" fill="none"/></svg>
<div style="left:164px;top:492px;width:496px;height:461px;background:#52ccae;border-left:2px solid #9de8d4;border-right:2px solid #2d8a72"></div>
<div class="g c" style="left:168px;top:496px;width:488px;height:23px">Solder Mask Checks</div>
<div style="left:165px;top:520px;width:494px;height:2px;background:#2d7a68"></div>
<div style="left:335px;top:522px;width:2px;height:431px;background:#1d5a4a"></div>
<div class="b" style="left:168px;top:524px;width:44px;height:24px"></div><span class="ti" style="left:172px;top:530px">None</span>
<div style="left:216px;top:523px;width:76px;height:27px;background:#9ddadb"></div><span class="tbi" style="left:227px;top:530px">Layers</span>
<div class="b" style="left:296px;top:524px;width:34px;height:24px"></div><span class="ti" style="left:300px;top:530px">All</span>
<div class="kg" style="left:165px;top:553px;width:170px;height:400px;border-top-color:#2d7a68"></div>
<div style="left:313px;top:554px;width:2px;height:399px;background:#9de8d4"></div>
<div class="t" style="left:170px;top:556px;width:140px;height:15px;background:#000;color:#52ccae;line-height:17px">ts</div>
<div class="t" style="left:170px;top:574px;width:140px;height:15px;background:#000;color:#52ccae;line-height:17px">bs</div>
<svg style="left:320px;top:555px" width="13" height="397"><path d="M6.500 1L12 11H1z" fill="#52ccae" stroke="#9de8d4"/><path d="M6.500 395L12 384H1z" fill="#52ccae" stroke="#2d8a72"/></svg>
<div class="b" style="left:338px;top:524px;width:204px;height:26px"></div><span class="tbi" style="left:373px;top:531px">Categories (23)</span>
<div style="left:542px;top:523px;width:114px;height:28px;background:#9ddadb"></div>
<span class="tb" style="left:545px;top:531px;color:#000">Meas:</span>
<div class="b" style="left:597px;top:523px;width:59px;height:27px"></div><span class="tb" style="left:602px;top:531px;color:#000">All</span><div class="b" style="left:638px;top:534px;width:11px;height:6px"></div>
<div class="kg" style="left:338px;top:555px;width:300px;height:338px;border-left-color:#1d5a4a;border-top-color:#1d5a4a"></div>
<span class="tb" style="left:341px;top:559px">NPTH annular Ring (4)</span>
<span class="tb" style="left:341px;top:577px">Via annular Ring (21)</span>
<span class="tb" style="left:341px;top:595px">SMD annular Ring (505)</span>
<span class="tb" style="left:341px;top:613px">Pad annular Ring (110)</span>
<span class="tb" style="left:341px;top:631px">SMD Pad Gasket (262)</span>
<div class="tb" style="left:341px;top:648px;width:293px;height:15px;background:#000;color:#52ccae;-webkit-text-stroke:.3px #52ccae;line-height:17px">Coverage (105)</div>
<span class="tb" style="left:341px;top:667px">Rout spacing (52)</span>
<span class="tb" style="left:341px;top:685px">No bridge (7)</span>
<span class="tb" style="left:341px;top:703px">SMDs Clearance Bridge (294)</span>
<span class="tb" style="left:341px;top:721px">SMD to Pad Clearance Bridge (10)</span>
<span class="tb" style="left:341px;top:739px">SM slivers (2)</span>
<span class="tb" style="left:341px;top:757px">SM local spacing (26)</span>
<span class="tb" style="left:341px;top:775px">Pad to Pad Spacing (241)</span>
<span class="tb" style="left:341px;top:793px">Pad to Pad Spacing(Same Net) (9)</span>
<span class="tb" style="left:341px;top:811px">Pad to Non-Pad Spacing (48)</span>
<span class="tb" style="left:341px;top:829px">Non-Pad to Non-Pad Spacing (2)</span>
<span class="tb" style="left:341px;top:847px">Covered VIA to SM (153)</span>
<span class="tb" style="left:341px;top:865px">SMD Partial Clearance (1)</span>
<div style="left:643px;top:556px;width:14px;height:339px;background:#45a892"></div>
<div class="g" style="left:645px;top:567px;width:11px;height:243px"></div>
<svg style="left:643px;top:556px" width="14" height="340"><path d="M7 1L13 11H1z" fill="#52ccae" stroke="#9de8d4"/><path d="M7 338L13 327H1z" fill="#52ccae" stroke="#2d8a72"/></svg>
<div style="left:338px;top:897px;width:299px;height:12px;background:#45a892"></div>
<div class="g" style="left:352px;top:898px;width:213px;height:11px"></div>
<svg style="left:338px;top:897px" width="300" height="12"><path d="M12 1V11L1 6z" fill="#52ccae" stroke="#9de8d4"/><path d="M288 1V11L299 6z" fill="#52ccae" stroke="#9de8d4"/></svg>
<div class="b" style="left:338px;top:913px;width:52px;height:23px"></div><span class="tb" style="left:341px;top:919px">First</span>
<div class="b" style="left:396px;top:913px;width:42px;height:23px"></div><span class="tb" style="left:399px;top:919px">&lt;---</span>
<div class="b" style="left:443px;top:913px;width:44px;height:23px"></div><span class="tb" style="left:447px;top:919px">---&gt;</span>
<div class="b" style="left:491px;top:913px;width:43px;height:23px"></div><span class="tb" style="left:494px;top:919px">Last</span>
<span class="tb" style="left:539px;top:919px">Index:</span>
<div class="kg" style="left:597px;top:914px;width:59px;height:22px"></div>
<span class="t" style="left:605px;top:915px">463</span>
<div style="left:603px;top:916px;width:1px;height:15px;background:#000"></div>
<div style="left:338px;top:939px;width:122px;height:14px;background:#52ccae"></div>
<div class="b" style="left:343px;top:941px;width:115px;height:20px"></div><span class="tb" style="left:349px;top:948px">Auto Zoom</span><div class="b" style="left:442px;top:949px;width:11px;height:6px"></div>
<div style="left:460px;top:939px;width:97px;height:14px;background:#20e020;border-top:1.500px solid #000;border-left:1.500px solid #000;border-right:1.500px solid #000"></div>
<div style="left:461px;top:941px;width:27px;height:12px;background:#9ddadb"></div><span class="tb" style="left:462px;top:948px;letter-spacing:-1px">Sev:</span>
<div style="left:495px;top:942px;width:50px;height:14px;background:#20f020;border:2px solid;border-color:#8ff08f #109010"></div><div class="b" style="left:535px;top:949px;width:11px;height:6px"></div>
<div class="k" style="left:561px;top:941px;width:12px;height:14px;background:#52ccae"></div>
<span class="tb" style="left:578px;top:945px">Show All</span>
</body></html>
